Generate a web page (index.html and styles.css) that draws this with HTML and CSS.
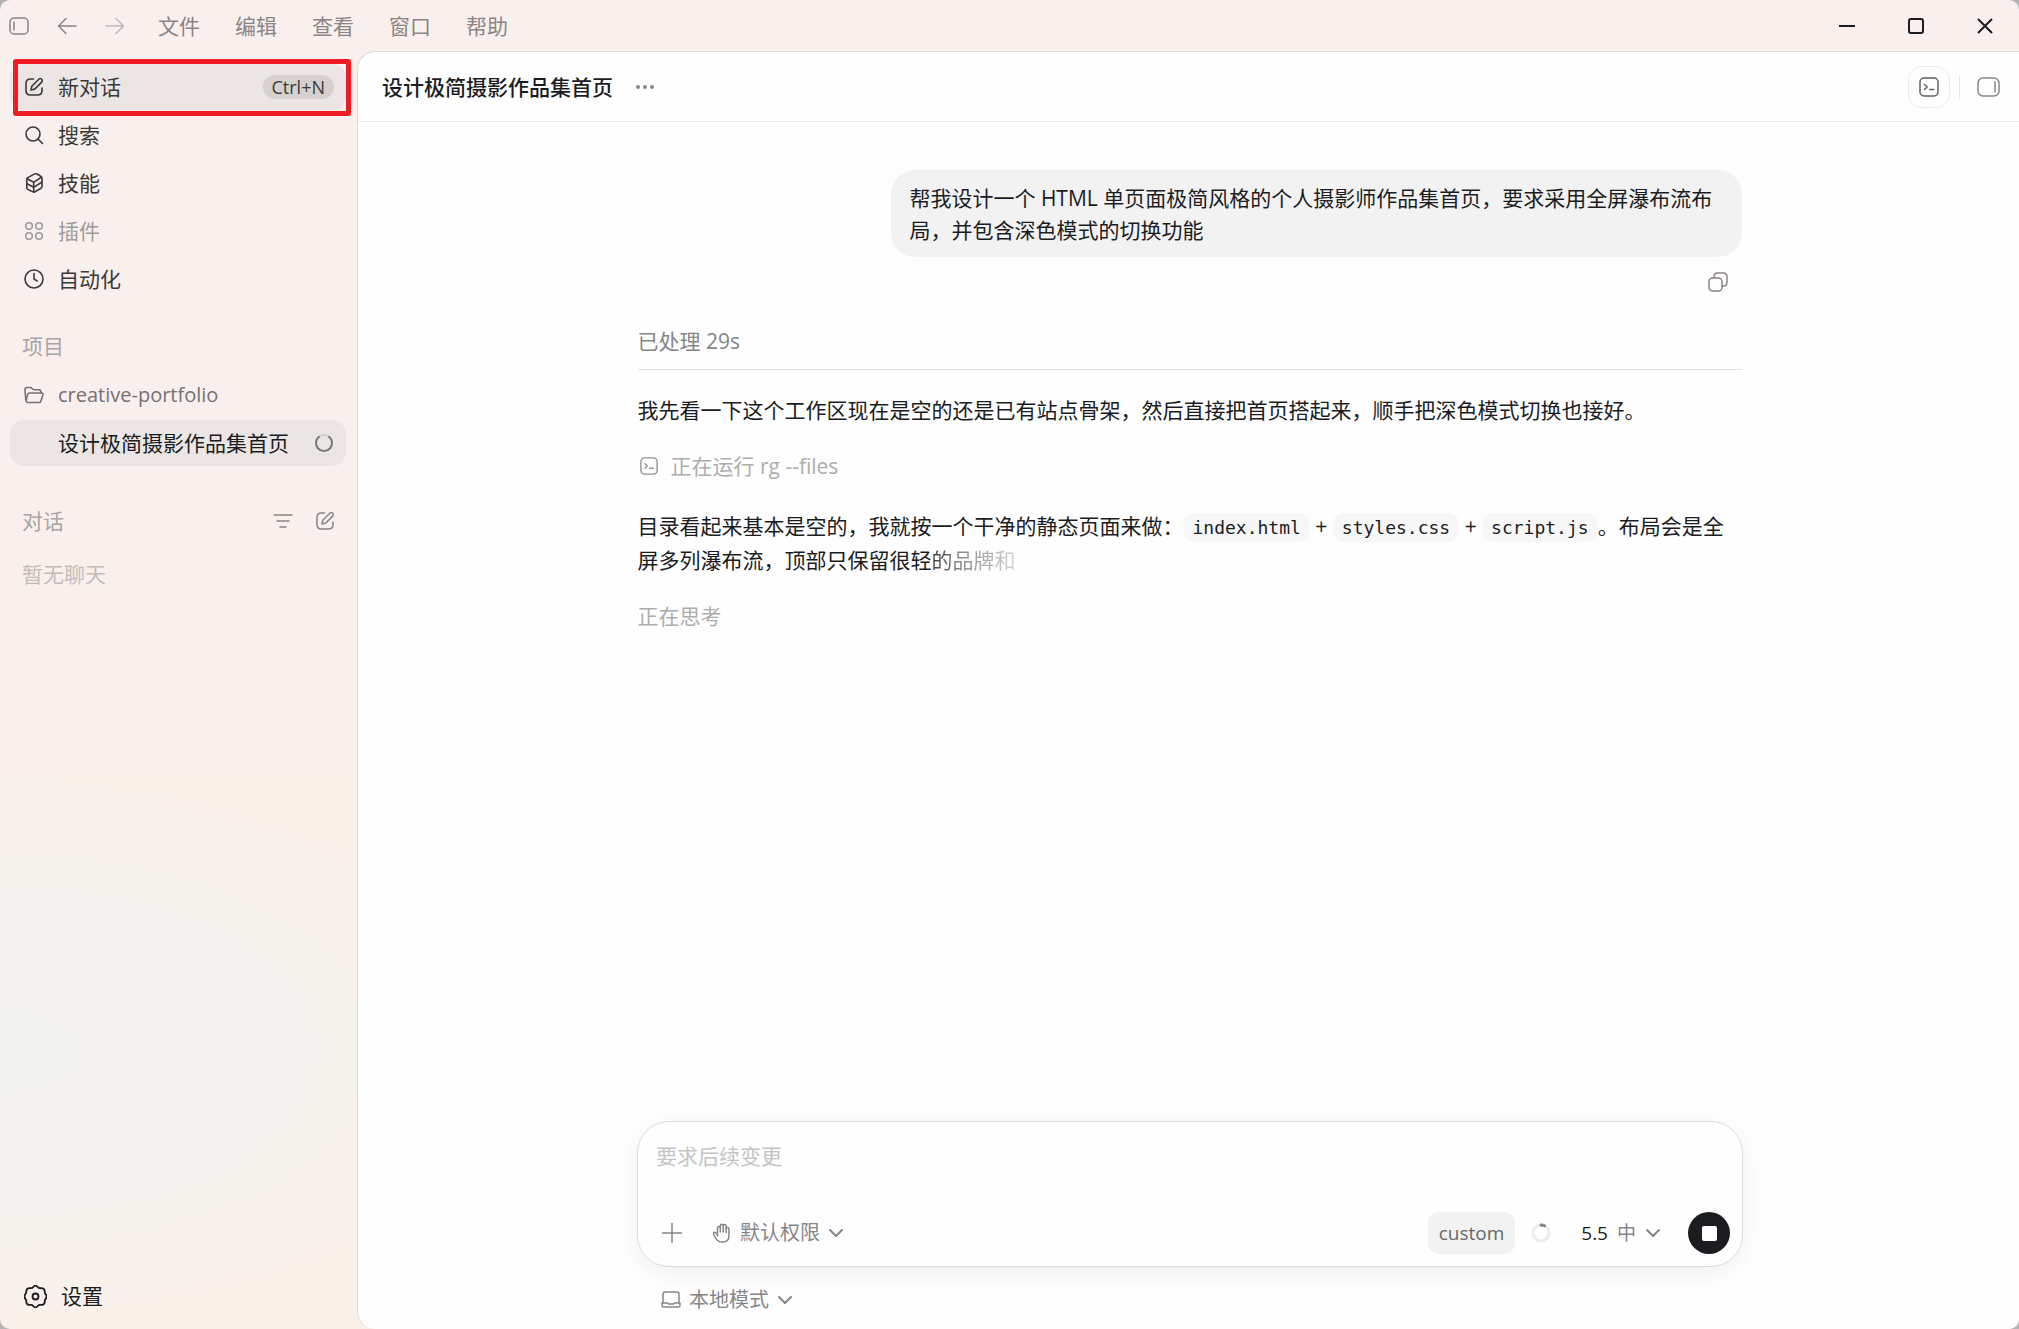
FILE: index.html
```
<!DOCTYPE html>
<html lang="zh-CN">
<head>
    <meta charset="UTF-8">
    <meta name="viewport" content="width=device-width, initial-scale=1.0">
    <title>设计极简摄影作品集首页</title>
    <link rel="stylesheet" href="styles.css">
</head>
<body>
    <!-- shared icons -->
    <svg class="sprite" aria-hidden="true">
        <symbol id="edit" viewBox="0 0 20 20">
            <path d="M9.5 2H6.5Q2 2 2 6.500V13.500Q2 18 6.500 18H13.500Q18 18 18 13.500V11"/>
            <path d="M7 13l.8-3.800 7-7a1.900 1.900 0 0 1 2.900 2.900l-7 7z"/>
        </symbol>
        <symbol id="terminal" viewBox="0 0 20 20">
            <rect x="1" y="1" width="18" height="18" rx="4"/>
            <path d="M5.500 7.500l2.700 2.500-2.700 2.500M10.800 12.500h4"/>
        </symbol>
        <symbol id="chevron" viewBox="0 0 16 16">
            <path d="M2 5l6 6 6-6"/>
        </symbol>
    </svg>

    <div class="app">
        <header class="titlebar">
            <button class="icon-btn" aria-label="切换边栏">
                <svg viewBox="0 0 20 20"><rect x="1" y="2" width="18" height="16" rx="4"/><path d="M5 6v8"/></svg>
            </button>
            <button class="icon-btn" aria-label="后退">
                <svg viewBox="0 0 20 20"><path d="M19 10H2M9 2.500L1.500 10 9 17.500"/></svg>
            </button>
            <button class="icon-btn faded" aria-label="前进">
                <svg viewBox="0 0 20 20"><path d="M1 10h17M11 2.500l7.500 7.500-7.500 7.500"/></svg>
            </button>
            <nav class="menu">
                <button>文件</button>
                <button>编辑</button>
                <button>查看</button>
                <button>窗口</button>
                <button>帮助</button>
            </nav>
            <div class="window-controls">
                <button aria-label="最小化"><svg viewBox="0 0 16 16"><path d="M0 8h16"/></svg></button>
                <button aria-label="最大化"><svg viewBox="0 0 16 16"><rect x="1" y="1" width="14" height="14" rx="2"/></svg></button>
                <button aria-label="关闭"><svg viewBox="0 0 16 16"><path d="M1 1l14 14M15 1L1 15"/></svg></button>
            </div>
        </header>

        <aside class="sidebar">
            <nav class="nav">
                <a href="#" class="row active highlight">
                    <svg class="icon"><use href="#edit"/></svg>
                    <span>新对话</span>
                    <kbd>Ctrl+N</kbd>
                </a>
                <a href="#" class="row">
                    <svg class="icon" viewBox="0 0 20 20"><circle cx="9" cy="9" r="7"/><path d="M14 14l4.500 4.500"/></svg>
                    <span>搜索</span>
                </a>
                <a href="#" class="row">
                    <svg class="icon" viewBox="0 0 20 20"><path d="M12.500.8l4.500 2.700q1 .7 1 1.800v8q0 1.200-1 1.900L11 18.700q-1 .7-2 .2l-5-2.400q-1.200-.6-1.200-1.900V6.500q0-1.200 1-1.900L10.500.9q1-.6 2-.1z"/><path d="M3.200 5.800L9.700 9.300 17.500 4.200M9.700 9.300V19M3 10.800l6.700 3.500L18 9"/></svg>
                    <span>技能</span>
                </a>
                <a href="#" class="row faded">
                    <svg class="icon" viewBox="0 0 20 20"><circle cx="5" cy="5" r="3.300"/><circle cx="15" cy="5" r="3.300"/><circle cx="5" cy="15" r="3.300"/><circle cx="15" cy="15" r="3.300"/></svg>
                    <span>插件</span>
                </a>
                <a href="#" class="row">
                    <svg class="icon" viewBox="0 0 20 20"><circle cx="10" cy="10" r="9"/><path d="M10 4.500V10l3.200 2"/></svg>
                    <span>自动化</span>
                </a>
            </nav>

            <h2>项目</h2>
            <a href="#" class="row project">
                <svg class="icon" viewBox="0 0 20 20"><path d="M3.500 17.500Q2 17 1.800 15L1 5Q.8 2.500 3.500 2.500h2.700q1 0 1.700.8l1 1q.5.500 1.300.5h5Q17 5 17 8"/><path d="M4.500 17.500h10.700q1.300 0 1.700-1.300L19 9.500Q19.300 8 17.800 8H5.500Q4.200 8 3.800 9.300L2.200 15"/></svg>
                <span>creative-portfolio</span>
            </a>
            <a href="#" class="row active thread">
                <span>设计极简摄影作品集首页</span>
                <svg class="icon spinner" viewBox="0 0 20 20"><circle cx="10" cy="10" r="8"/><path d="M5 3.800A8 8 0 1 0 15 3.800"/></svg>
            </a>

            <div class="section-head">
                <h2>对话</h2>
                <button class="icon-btn" aria-label="筛选"><svg viewBox="0 0 20 20"><path d="M1 4h18M4 10h12M7 16h6"/></svg></button>
                <button class="icon-btn" aria-label="新对话"><svg><use href="#edit"/></svg></button>
            </div>
            <p class="empty">暂无聊天</p>

            <a href="#" class="row settings">
                <svg class="icon" viewBox="0 0 20 20"><path d="M7.800 2Q10-.8 12.200 2q.7.900 2 .7 3.900-.4 3.800 3-.1 1 .6 1.900 2 2.400 0 4.800-.7.900-.6 1.900.1 3.400-3.800 3-1.300-.2-2 .7-2.200 2.800-4.400 0-.7-.9-2-.7-3.900.4-3.800-3 .1-1-.6-1.900-2-2.400 0-4.800.7-.9.6-1.900-.1-3.400 3.800-3 1.300.2 2-.7z"/><circle cx="10" cy="10" r="2.600"/></svg>
                <span>设置</span>
            </a>
        </aside>

        <main class="panel">
            <header class="panel-head">
                <h1>设计极简摄影作品集首页</h1>
                <button class="icon-btn more" aria-label="更多"><svg viewBox="0 0 20 20"><circle cx="3" cy="10" r="2"/><circle cx="10" cy="10" r="2"/><circle cx="17" cy="10" r="2"/></svg></button>
                <button class="terminal-btn" aria-label="终端"><svg><use href="#terminal"/></svg></button>
                <span class="divider"></span>
                <button class="icon-btn side-toggle" aria-label="侧面板">
                    <svg viewBox="0 0 24 20"><rect x="1" y="1" width="21" height="18" rx="5"/><path d="M18 5v10"/></svg>
                </button>
            </header>

            <section class="chat">
                <div class="user-message">帮我设计一个 HTML 单页面极简风格的个人摄影师作品集首页，要求采用全屏瀑布流布局，并包含深色模式的切换功能</div>
                <button class="icon-btn copy" aria-label="复制"><svg viewBox="0 0 20 20"><rect x="1" y="6" width="13" height="13" rx="3.500"/><path d="M6 6V4.500Q6 1 9.500 1h6Q19 1 19 4.500v6q0 3.500-3.500 3.500H14"/></svg></button>

                <div class="processed">已处理 29s</div>
                <div class="reply">
                    <p>我先看一下这个工作区现在是空的还是已有站点骨架，然后直接把首页搭起来，顺手把深色模式切换也接好。</p>
                    <p class="running"><svg><use href="#terminal"/></svg>正在运行 rg --files</p>
                    <p>目录看起来基本是空的，我就按一个干净的静态页面来做：<code>index.html</code> + <code>styles.css</code> + <code>script.js</code>。布局会是全屏多列瀑布流，顶部只保留很轻<span class="fade">的品牌和</span></p>
                    <p class="muted">正在思考</p>
                </div>
            </section>

            <footer class="footer">
                <form class="composer">
                    <textarea aria-label="消息" placeholder="要求后续变更"></textarea>
                    <div class="toolbar">
                        <button type="button" class="icon-btn" aria-label="添加"><svg viewBox="0 0 20 20"><path d="M10 0v20M0 10h20"/></svg></button>
                        <label class="dropdown permission">
                            <svg viewBox="0 0 20 20"><path d="M5.500 10V4.800a1.400 1.400 0 0 1 2.800 0V2.600a1.400 1.400 0 0 1 2.900 0 1.400 1.400 0 0 1 2.900 1.200V6a1.400 1.400 0 0 1 2.900 0v6.500Q17 19 10.500 19 6 19 3.800 15.300L1.800 11.500Q1 9.500 2.300 9.200q1.300-.2 2.200 1.300L6 12.800"/><path d="M8.300 4.500V9M11.200 2.800V9M14.100 5.500v4"/></svg>
                            <select aria-label="权限"><option>默认权限</option></select>
                            <svg class="chevron"><use href="#chevron"/></svg>
                        </label>
                        <span class="chip">custom</span>
                        <svg class="usage" viewBox="0 0 20 20"><circle cx="10" cy="10" r="8"/><path d="M10 2q2 0 3.500.8"/></svg>
                        <button type="button" class="model"><b>5.5</b> 中 <svg class="chevron"><use href="#chevron"/></svg></button>
                        <button type="button" class="stop" aria-label="停止"></button>
                    </div>
                </form>
                <label class="dropdown mode">
                    <svg viewBox="0 0 20 20"><path d="M2 13V4.500Q2 2 4.500 2h11Q18 2 18 4.500V13"/><path d="M1 13h5.500l1 1h5l1-1H19v2.500q0 1.500-1.500 1.500h-15Q1 17 1 15.500z"/></svg>
                    <select aria-label="模式"><option>本地模式</option></select>
                    <svg class="chevron"><use href="#chevron"/></svg>
                </label>
            </footer>
        </main>
    </div>
</body>
</html>
```
FILE: styles.css
```
* {
    box-sizing: border-box;
}
body {
    margin: 0;
    background-color: #b5b4b4;
    color: #1a1c1f;
    font-family: "Open Sans", "Noto Sans CJK SC", sans-serif;
    font-size: 21px;
    line-height: 32px;
}
h1, h2, p {
    margin: 0;
    font-size: 21px;
    font-weight: 400;
}
a {
    color: inherit;
    text-decoration: none;
}
button, select, textarea {
    margin: 0;
    padding: 0;
    border: none;
    background: none;
    color: inherit;
    font: inherit;
}
svg {
    display: block;
    flex: none;
    width: 20px;
    height: 20px;
    fill: none;
    stroke: currentColor;
    stroke-width: 2;
    stroke-linecap: round;
    stroke-linejoin: round;
}
.sprite {
    display: none;
}
.icon-btn {
    flex: none;
    color: #8a8583;
}
.icon-btn svg {
    stroke-width: 1.5;
}

/* window frame */
.app {
    display: grid;
    grid-template-columns: 357px 1fr;
    grid-template-rows: 51px 1fr;
    height: 100vh;
    border-radius: 10px;
    overflow: hidden;
    background-color: #f9f0ee;
    background-image:
        radial-gradient(ellipse 520px 270px at 0 79%, #f3f3f0 0%, #f5f2ee 60%, rgba(250, 240, 234, 0) 100%),
        linear-gradient(#f9f0ee 35%, #faf0ea 60%);
}
.titlebar {
    grid-column: 1 / 3;
    display: flex;
    align-items: center;
    padding-left: 9px;
}
.titlebar > .icon-btn {
    margin-right: 28px;
}
.titlebar > .icon-btn.faded {
    opacity: 0.5;
}
.menu {
    display: flex;
    gap: 35px;
    margin-left: 5px;
    color: #8a8583;
}
.window-controls {
    display: flex;
    gap: 53px;
    margin-left: auto;
    padding-right: 26px;
}
.window-controls svg {
    width: 16px;
    height: 16px;
    stroke-linecap: butt;
}

/* sidebar */
.sidebar {
    display: flex;
    flex-direction: column;
    padding: 13px 11px 10px 10px;
}
.nav {
    display: flex;
    flex-direction: column;
    gap: 2px;
    margin-bottom: 28px;
}
.row {
    position: relative;
    display: flex;
    align-items: center;
    gap: 14px;
    height: 46px;
    padding: 0 12px 0 14px;
    border-radius: 14px;
    color: #3b3a3a;
}
.row .icon {
    stroke-width: 1.6;
}
.row.faded {
    color: #a09b9a;
}
.row.active {
    background-color: #ebe6e3;
}
.highlight::after {
    content: "";
    position: absolute;
    inset: -5px -5px -6px 3px;
    border: 5px solid #ef1c25;
    border-radius: 3px;
}
kbd {
    margin-left: auto;
    padding: 0 9px;
    border-radius: 12px;
    background-color: #d6d1cf;
    font-family: inherit;
    font-size: 18px;
    line-height: 24px;
}
.sidebar h2 {
    padding-left: 12px;
    color: #aaa4a2;
}
.sidebar .project {
    margin-top: 10px;
    margin-bottom: 2px;
    color: #757170;
    font-size: 20px;
}
.sidebar .thread {
    padding-left: 48px;
    color: #1a1c1f;
}
.row .spinner {
    margin-left: auto;
    color: #7b7876;
    stroke-width: 2;
}
.spinner circle {
    stroke: #d0cccb;
}
.section-head {
    display: flex;
    align-items: center;
    gap: 22px;
    margin-top: 39px;
    padding-right: 11px;
}
.section-head h2 {
    margin-right: auto;
}
.empty {
    margin-top: 21px;
    padding-left: 12px;
    color: #c3bcb9;
}
.settings {
    margin-top: auto;
    padding-left: 14px;
    color: #1a1c1f;
}
.row.settings .icon {
    width: 23px;
    height: 23px;
}

/* conversation */
.panel {
    display: flex;
    flex-direction: column;
    min-width: 0;
    border: 1px solid #e2dbda;
    border-right: none;
    border-bottom: none;
    border-radius: 18px 0 0 18px;
    background-color: #fefefe;
}
.panel-head {
    display: flex;
    align-items: center;
    height: 70px;
    padding: 0 18px 0 24px;
    border-bottom: 1px solid #ebebeb;
}
.panel-head h1 {
    font-weight: 500;
}
.more {
    margin-left: 22px;
}
.more circle {
    fill: currentColor;
    stroke: none;
}
.terminal-btn {
    display: grid;
    place-items: center;
    width: 42px;
    height: 42px;
    margin-left: auto;
    border: 1px solid #ebebeb;
    border-radius: 14px;
    color: #5f6062;
}
.terminal-btn svg, .running svg {
    stroke-width: 1.5;
}
.divider {
    width: 1px;
    height: 24px;
    margin: 0 17px 0 9px;
    background-color: #e5e5e5;
}
.side-toggle svg {
    width: 24px;
}
.chat {
    flex: 1;
    display: flex;
    flex-direction: column;
    width: 100%;
    max-width: 1106px;
    min-height: 0;
    margin: 0 auto;
    padding: 48px 0 0 2px;
    overflow: hidden;
}
.user-message {
    align-self: flex-end;
    max-width: 77%;
    padding: 12px 18px 11px;
    border-radius: 24px;
    background-color: #f2f2f2;
}
.copy {
    align-self: flex-end;
    margin: 15px 14px 33px 0;
}
.processed {
    padding-bottom: 12px;
    border-bottom: 1px solid #e2e2e2;
    color: #858687;
}
.reply {
    display: flex;
    flex-direction: column;
    gap: 24px;
    padding-top: 24px;
}
.running {
    display: flex;
    align-items: center;
    gap: 13px;
    margin-bottom: 4px;
    padding-left: 2px;
    color: #adadae;
}
.running svg {
    width: 18px;
    height: 18px;
    color: #8f9091;
}
.muted {
    color: #adadae;
}
code {
    padding: 4px 9px;
    border-radius: 11px;
    background-color: #f7f7f7;
    font-family: "DejaVu Sans Mono", monospace;
    font-size: 18px;
}
.fade {
    background-image: linear-gradient(90deg, #3c3d40, #8d8e8f 35%, #d4d4d4);
    background-clip: text;
    -webkit-background-clip: text;
    color: transparent;
}

/* composer */
.footer {
    width: 100%;
    max-width: 1109px;
    margin: 0 auto;
    padding: 0 0 13px 3px;
}
.composer {
    border: 1px solid #dcdcdc;
    border-radius: 32px;
    background-color: #fefefe;
    box-shadow: 0 6px 24px rgba(0, 0, 0, 0.06);
}
.composer textarea {
    display: block;
    width: 100%;
    height: 90px;
    padding: 18px;
    resize: none;
    outline: none;
}
.composer textarea::placeholder {
    color: #c4c4c4;
    opacity: 1;
}
.toolbar {
    display: flex;
    align-items: center;
    padding: 0 12px 12px 24px;
    font-size: 20px;
}
.dropdown {
    display: flex;
    align-items: center;
    gap: 8px;
    width: max-content;
    color: #858687;
    font-size: 20px;
}
.dropdown svg {
    stroke-width: 1.5;
}
.dropdown select {
    appearance: none;
}
.dropdown .chevron, .model .chevron {
    width: 16px;
    height: 16px;
    stroke-width: 2;
}
.permission {
    margin-left: 30px;
}
.chip {
    margin-left: auto;
    padding: 0 11px;
    border-radius: 11px;
    background-color: #f2f2f2;
    color: #67686a;
    font-size: 19px;
    line-height: 42px;
}
.usage {
    margin: 0 30px 0 16px;
    stroke: #ececec;
    stroke-width: 3;
}
.usage path {
    stroke: #858687;
}
.model {
    display: flex;
    align-items: center;
    gap: 9px;
    color: #858687;
    font-size: 19px;
}
.model b {
    color: #1a1c1f;
    font-weight: 400;
}
.stop {
    display: grid;
    place-items: center;
    width: 42px;
    height: 42px;
    margin-left: 27px;
    border-radius: 50%;
    background-color: #1a1c1f;
}
.stop::before {
    content: "";
    width: 15px;
    height: 15px;
    border-radius: 2px;
    background-color: #ffffff;
}
.mode {
    margin: 17px 0 0 24px;
}
```
